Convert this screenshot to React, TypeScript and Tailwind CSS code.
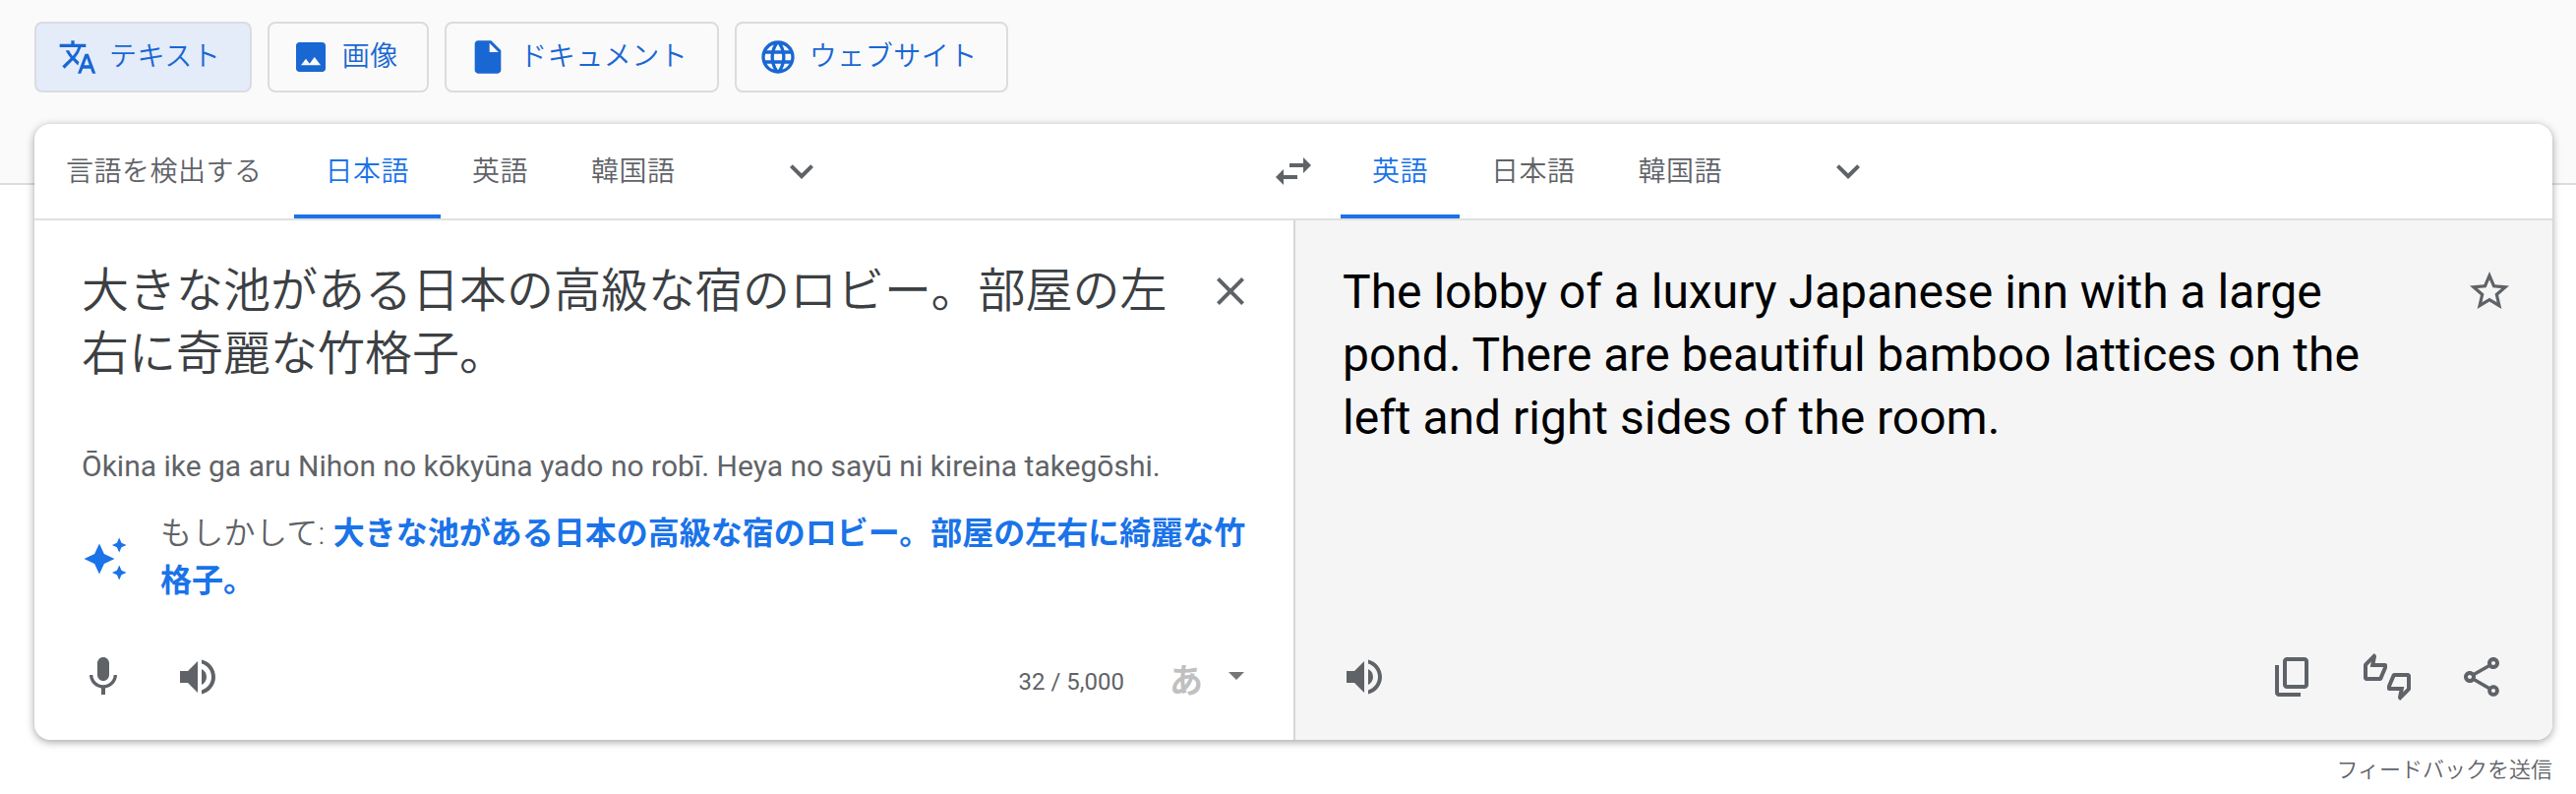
import type { ReactNode } from 'react';
import {
  MdTranslate,
  MdInsertDriveFile,
  MdLanguage,
  MdExpandMore,
  MdSwapHoriz,
  MdClose,
  MdStarBorder,
  MdMic,
  MdVolumeUp,
  MdOutlineThumbsUpDown,
  MdOutlineShare,
} from 'react-icons/md';

function ImageIcon() {
  return (
    <svg viewBox="0 0 24 24" fill="currentColor" className="size-10">
      <path d="M5 21q-.825 0-1.412-.587T3 19V5q0-.825.588-1.412T5 3h14q.825 0 1.413.588T21 5v14q0 .825-.587 1.413T19 21zm1-4h12l-3.75-5-3 4L9 13z" />
    </svg>
  );
}

function CopyIcon() {
  return (
    <svg viewBox="0 0 24 24" fill="currentColor" className="size-12">
      <path d="M9 18q-.825 0-1.412-.587T7 16V4q0-.825.588-1.412T9 2h9q.825 0 1.413.588T20 4v12q0 .825-.587 1.413T18 18zm0-2h9V4H9zm-4 6q-.825 0-1.412-.587T3 20V6h2v14h11v2z" />
    </svg>
  );
}

function SparkleIcon() {
  return (
    <svg viewBox="0 0 48 48" fill="currentColor" className="mt-1 size-12 shrink-0">
      <path d="M18 8.500l4.900 10.600L33.500 24l-10.600 4.900L18 39.500l-4.900-10.600L2.500 24l10.600-4.900z" />
      <path d="M38.200 2.400l2.300 5.300 5.100 2.300-5.100 2.300-2.300 5.300-2.300-5.300L30.900 10l5-2.300z" />
      <path d="M38.200 30.400l2.300 5.300 5.100 2.300-5.100 2.300-2.300 5.300-2.300-5.300-5-2.300 5-2.300z" />
    </svg>
  );
}

function ModeButton({ icon, label, active = false }: { icon: ReactNode; label: string; active?: boolean }) {
  return (
    <button
      className={`flex h-[72px] items-center gap-3 rounded-lg border-2 border-[#dadce0] pr-[29.5px] pl-[22px] text-[28px] tracking-[0.5px] text-[#1967d2] ${
        active ? 'bg-[#e4ebf9]' : ''
      }`}
    >
      {icon}
      <span className="-mt-px leading-10 whitespace-nowrap">{label}</span>
    </button>
  );
}

function LangTab({ label, active = false }: { label: string; active?: boolean }) {
  return (
    <button
      className={`flex h-24 items-center border-t-4 border-b-4 border-t-transparent px-8 text-[28px] tracking-[0.5px] whitespace-nowrap ${
        active ? 'border-b-[#1a73e8] text-[#1a73e8]' : 'border-b-transparent'
      }`}
    >
      <span className="mt-px leading-10">{label}</span>
    </button>
  );
}

export default function App() {
  return (
    <div className="h-[807px] w-[2619px] overflow-hidden bg-white font-[Roboto,'Noto_Sans_CJK_JP',sans-serif] font-[350] text-[#5f6368]">
      <header className="h-[188px] border-b-2 border-[#dadce0] bg-[#fafafa] pt-[22px] pl-[35px]">
        <nav className="flex gap-4">
          <ModeButton active icon={<MdTranslate className="size-10" />} label="テキスト" />
          <ModeButton icon={<ImageIcon />} label="画像" />
          <ModeButton icon={<MdInsertDriveFile className="size-10" />} label="ドキュメント" />
          <ModeButton icon={<MdLanguage className="size-10" />} label="ウェブサイト" />
        </nav>
      </header>

      <main className="relative -mt-[62px] ml-[35px] flex h-[626px] w-[2560px] flex-col overflow-hidden rounded-2xl bg-white shadow-[0_2px_8px_rgba(0,0,0,0.37)]">
        <div className="flex h-[98px] shrink-0 border-b-2 border-[#e0e0e0]">
          <div className="flex w-[1328px] items-start">
            <LangTab label="言語を検出する" />
            <LangTab active label="日本語" />
            <LangTab label="英語" />
            <LangTab label="韓国語" />
            <MdExpandMore className="mt-6 ml-[72px] size-12" />
            <MdSwapHoriz className="mt-6 mr-6 ml-auto size-12" />
          </div>
          <div className="flex items-start">
            <LangTab active label="英語" />
            <LangTab label="日本語" />
            <LangTab label="韓国語" />
            <MdExpandMore className="mt-6 ml-[72px] size-12" />
          </div>
        </div>

        <div className="flex grow">
          <section className="flex w-[1280px] flex-col">
            <div className="flex h-[184px] items-start pt-10 pl-12">
              <p className="w-[1130px] text-[48px] leading-[64px] text-[#3c4043]">
                大きな池がある日本の高級な宿のロビー。部屋の左
                <br />
                右に奇麗な竹格子。
              </p>
              <MdClose className="mt-2 ml-[14px] size-12" />
            </div>
            <p className="mt-[46px] h-10 pl-12 text-[30px] leading-10 font-normal whitespace-nowrap">
              Ōkina ike ga aru Nihon no kōkyūna yado no robī. Heya no sayū ni kireina takegōshi.
            </p>
            <div className="mt-6 flex items-center gap-8 pl-12 text-[32px] leading-[48px] text-[#1a73e8]">
              <SparkleIcon />
              <p className="whitespace-nowrap">
                <span className="tracking-[0.3px] text-[#5f6368]">もしかして: </span>
                <b className="font-bold">
                  大きな池がある日本の高級な宿のロビー。部屋の左右に綺麗な竹
                  <br />
                  格子。
                </b>
              </p>
            </div>
            <div className="mt-auto flex h-[88px] items-start pb-16 pl-[46px]">
              <MdMic className="size-12" />
              <MdVolumeUp className="ml-12 size-12" />
              <span className="mt-[9px] ml-auto text-[24px] leading-10 font-normal">32 / 5,000</span>
              <span className="mt-1 ml-[46px] text-[34px] leading-[48px] font-bold text-[#c0c0c0]">あ</span>
              <svg viewBox="0 0 16 8" className="mt-[19px] mr-[50px] ml-[26px] h-2 w-4" fill="#757575">
                <path d="M0 0h16L8 8z" />
              </svg>
            </div>
          </section>

          <section className="flex w-[1280px] flex-col border-l-2 border-[#d6d6d6] bg-[#f5f5f5]">
            <div className="flex items-start pt-[41px] pl-12">
              <p className="text-[48px] leading-[64px] font-normal whitespace-nowrap text-black">
                The lobby of a luxury Japanese inn with a large
                <br />
                pond. There are beautiful bamboo lattices on the
                <br />
                left and right sides of the room.
              </p>
              <MdStarBorder className="mt-[7px] mr-10 ml-auto size-12" />
            </div>
            <div className="mt-auto flex h-[88px] items-start pr-12 pl-[46px]">
              <MdVolumeUp className="size-12" />
              <div className="ml-auto flex gap-12">
                <CopyIcon />
                <MdOutlineThumbsUpDown className="size-12" />
                <MdOutlineShare className="size-12" />
              </div>
            </div>
          </section>
        </div>
      </main>

      <footer className="mt-[11px] mr-6 text-right text-[22px] leading-10">フィードバックを送信</footer>
    </div>
  );
}
